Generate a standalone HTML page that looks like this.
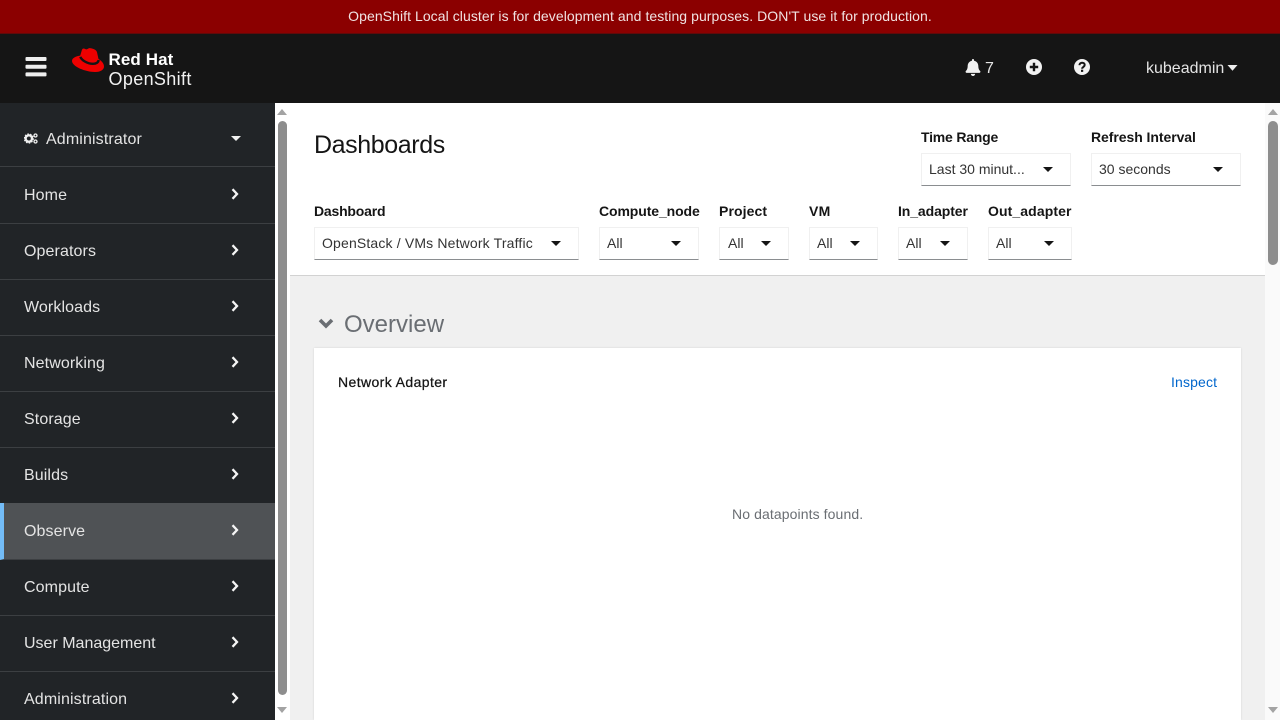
<!DOCTYPE html>
<html lang="en">
<head>
<meta charset="utf-8">
<title>Dashboards · OpenShift</title>
<style>
*{box-sizing:border-box}
html,body{margin:0;padding:0;width:1280px;height:720px;overflow:hidden;background:#fff;font-family:"Liberation Sans",sans-serif;color:#151515}
.a{position:absolute;white-space:nowrap}
#banner{left:0;top:0;width:1280px;height:34px;background:#8b0000;color:#f0e2e2;font-size:14px;line-height:33px;text-align:center;border-bottom:1px solid #5f0a0a;letter-spacing:.066px}
#head{left:0;top:34px;width:1280px;height:69px;background:#151515}
#side{left:0;top:103px;width:275px;height:617px;background:#212427;overflow:hidden}
.nav{position:absolute;left:0;width:275px;height:56px;border-bottom:1px solid #3c3f42;color:#e4e4e4;font-size:16px;line-height:55px;padding-left:24px;letter-spacing:.1px}
.nav svg{position:absolute;left:231px;top:20px}
.nav.on{background:#4f5255;border-left:4px solid #73bcf7;padding-left:20px;border-bottom-color:#3c3f42}
.nav.on svg{left:227px;top:21px}
.sb{background:#fafafa}
.th{background:#8d8d8d;border-radius:5px}
.lb{font-size:14px;font-weight:700;color:#151515;line-height:18px}
.sel{position:absolute;height:33px;background:#fff;border:1px solid #f0f0f0;border-bottom:1px solid #8a8d90;font-size:14px;line-height:31px;padding-left:7px;color:#333;white-space:nowrap}
.sel i{position:absolute;top:13px;width:0;height:0;border-left:5px solid transparent;border-right:5px solid transparent;border-top:5px solid #151515}
</style>
</head>
<body>
<div id="banner" class="a">OpenShift Local cluster is for development and testing purposes. DON'T use it for production.</div>
<div id="head" class="a"></div>

<!-- hamburger -->
<svg class="a" style="left:25px;top:57px" width="22" height="20" viewBox="0 0 22 20"><g fill="#eeeeee"><rect x="0.5" y="0" width="21" height="4" rx="1"/><rect x="0.5" y="7.7" width="21" height="4" rx="1"/><rect x="0.5" y="15.4" width="21" height="4" rx="1"/></g></svg>

<!-- logo hat -->
<svg class="a" style="left:71px;top:47px" width="34" height="27" viewBox="0 0 34 27">
<path d="M9.200 8.600C5 9.200 1 10.800 1 14c0 5.500 13.500 11 23 11 6 0 9-2.500 9-5.500 0-3.300-2.800-5.800-5.500-7.500L26 5.200C25.500 3.500 24 2.300 21 1.500 19 1 18 1 17 1.800c-1 .7-2 .7-3 .1-1.500-.8-2.600-.4-3.100 1.100z" fill="#ee0000"/>
<path d="M9.300 9.800C10.500 13 16 16.800 22 16.800c3.200 0 5.400-1.300 5.600-3.800" fill="none" stroke="#151515" stroke-width="2.400"/>
</svg>
<div class="a" style="left:108.500px;top:50px;font-size:17px;font-weight:700;color:#fff;line-height:20px;letter-spacing:.1px">Red Hat</div>
<div class="a" style="left:108.500px;top:69px;font-size:18px;color:#f2f2f2;line-height:20px;letter-spacing:.35px">OpenShift</div>

<!-- header right -->
<svg class="a" style="left:965px;top:59px" width="16" height="17" viewBox="0 0 448 512"><path fill="#f0f0f0" d="M224 512c35.300 0 64-28.700 64-64H160c0 35.300 28.700 64 64 64zm215.400-149.700c-19.300-20.800-55.500-52-55.500-154.300 0-77.700-54.500-139.900-127.900-155.200V32c0-17.700-14.300-32-32-32s-32 14.300-32 32v20.800C118.600 68.100 64.100 130.300 64.100 208c0 102.300-36.200 133.500-55.500 154.300-6 6.400-8.700 14.100-8.600 21.700.100 16.400 13 32 32.100 32h383.800c19.100 0 32-15.600 32.100-32 .1-7.600-2.600-15.300-8.600-21.700z"/></svg>
<div class="a" style="left:985px;top:59px;font-size:16px;line-height:19px;color:#e4e4e4">7</div>
<svg class="a" style="left:1026px;top:59px" width="16" height="16" viewBox="0 0 16 16"><circle cx="8" cy="8" r="8" fill="#f2f2f2"/><path d="M8 3.800v8.400M3.800 8h8.400" stroke="#151515" stroke-width="2.400"/></svg>
<svg class="a" style="left:1074px;top:59px" width="16" height="16" viewBox="0 0 16 16"><circle cx="8" cy="8" r="8" fill="#f2f2f2"/><path d="M5.400 6.200C5.500 4.600 6.700 3.700 8.100 3.700c1.500 0 2.600.9 2.600 2.200 0 2-2.600 2-2.600 3.900" fill="none" stroke="#151515" stroke-width="2"/><rect x="7" y="10.700" width="2.200" height="2.200" fill="#151515"/></svg>
<div class="a" style="left:1146px;top:59px;font-size:16px;line-height:19px;color:#e4e4e4">kubeadmin</div>
<svg class="a" style="left:1227px;top:65px" width="11" height="6" viewBox="0 0 11 6"><path d="M.5 0h10L5.500 5.800z" fill="#eee"/></svg>

<!-- sidebar -->
<div id="side" class="a">
<div class="nav" style="top:0;height:64px;line-height:73px;padding-left:46px;letter-spacing:.13px">Administrator
<svg style="position:absolute;left:231px;top:33px" width="10" height="5" viewBox="0 0 10 5"><path d="M0 0h10L5 5z" fill="#f0f0f0"/></svg></div>
<svg class="a" style="left:24px;top:30px" width="14" height="11" viewBox="0 0 14 11"><circle cx="4.800" cy="5.500" r="3.200" fill="none" stroke="#f0f0f0" stroke-width="2.400"/><circle cx="4.800" cy="5.500" r="4.500" fill="none" stroke="#f0f0f0" stroke-width="1.200" stroke-dasharray="1.500 1.300"/><circle cx="11.500" cy="2.500" r="1.500" fill="none" stroke="#f0f0f0" stroke-width="1.300"/><circle cx="11.500" cy="8.500" r="1.500" fill="none" stroke="#f0f0f0" stroke-width="1.300"/></svg>
<div class="nav" style="top:65px">Home<svg width="8" height="12" viewBox="0 0 8 12"><path d="M1.500 1.200L6 6l-4.500 4.800" fill="none" stroke="#f5f5f5" stroke-width="2.300"/></svg></div>
<div class="nav" style="top:121px">Operators<svg width="8" height="12" viewBox="0 0 8 12"><path d="M1.500 1.200L6 6l-4.500 4.800" fill="none" stroke="#f5f5f5" stroke-width="2.300"/></svg></div>
<div class="nav" style="top:177px">Workloads<svg width="8" height="12" viewBox="0 0 8 12"><path d="M1.500 1.200L6 6l-4.500 4.800" fill="none" stroke="#f5f5f5" stroke-width="2.300"/></svg></div>
<div class="nav" style="top:233px">Networking<svg width="8" height="12" viewBox="0 0 8 12"><path d="M1.500 1.200L6 6l-4.500 4.800" fill="none" stroke="#f5f5f5" stroke-width="2.300"/></svg></div>
<div class="nav" style="top:289px">Storage<svg width="8" height="12" viewBox="0 0 8 12"><path d="M1.500 1.200L6 6l-4.500 4.800" fill="none" stroke="#f5f5f5" stroke-width="2.300"/></svg></div>
<div class="nav" style="top:345px">Builds<svg width="8" height="12" viewBox="0 0 8 12"><path d="M1.500 1.200L6 6l-4.500 4.800" fill="none" stroke="#f5f5f5" stroke-width="2.300"/></svg></div>
<div class="nav on" style="top:400px;height:57px;line-height:57px">Observe<svg width="8" height="12" viewBox="0 0 8 12"><path d="M1.500 1.200L6 6l-4.500 4.800" fill="none" stroke="#f5f5f5" stroke-width="2.300"/></svg></div>
<div class="nav" style="top:457px">Compute<svg width="8" height="12" viewBox="0 0 8 12"><path d="M1.500 1.200L6 6l-4.500 4.800" fill="none" stroke="#f5f5f5" stroke-width="2.300"/></svg></div>
<div class="nav" style="top:513px;letter-spacing:0">User Management<svg width="8" height="12" viewBox="0 0 8 12"><path d="M1.500 1.200L6 6l-4.500 4.800" fill="none" stroke="#f5f5f5" stroke-width="2.300"/></svg></div>
<div class="nav" style="top:569px;border-bottom:0;letter-spacing:.13px">Administration<svg width="8" height="12" viewBox="0 0 8 12"><path d="M1.500 1.200L6 6l-4.500 4.800" fill="none" stroke="#f5f5f5" stroke-width="2.300"/></svg></div>
</div>

<!-- sidebar scrollbar -->
<div class="a" style="left:275px;top:103px;width:15px;height:617px;background:#fff"></div>
<div class="a th" style="left:278px;top:121px;width:9px;height:574px"></div>
<svg class="a" style="left:277px;top:109px" width="10" height="6" viewBox="0 0 10 6"><path d="M0 6h10L5 0z" fill="#a3a3a3"/></svg>
<svg class="a" style="left:277px;top:707px" width="10" height="6" viewBox="0 0 10 6"><path d="M0 0h10L5 6z" fill="#a3a3a3"/></svg>

<!-- main -->
<div class="a" style="left:290px;top:103px;width:975px;height:172px;background:#fff"></div>
<div class="a" style="left:290px;top:275px;width:975px;height:445px;background:#f0f0f0;border-top:1px solid #d2d2d2"></div>
<div class="a sb" style="left:1265px;top:103px;width:15px;height:617px"></div>
<div class="a th" style="left:1268px;top:121px;width:10px;height:144px"></div>
<svg class="a" style="left:1268px;top:109px" width="10" height="6" viewBox="0 0 10 6"><path d="M0 6h10L5 0z" fill="#a3a3a3"/></svg>
<svg class="a" style="left:1268px;top:707px" width="10" height="6" viewBox="0 0 10 6"><path d="M0 0h10L5 6z" fill="#a3a3a3"/></svg>

<div class="a" style="left:314px;top:130px;font-size:25px;line-height:30px;color:#151515;letter-spacing:-.4px">Dashboards</div>

<div class="a lb" style="left:921px;top:128px;letter-spacing:-.2px">Time Range</div>
<div class="sel" style="left:921px;top:153px;width:150px">Last 30 minut...<i style="left:121px"></i></div>
<div class="a lb" style="left:1091px;top:128px;letter-spacing:-.06px">Refresh Interval</div>
<div class="sel" style="left:1091px;top:153px;width:150px">30 seconds<i style="left:121px"></i></div>

<div class="a lb" style="left:314px;top:202px;letter-spacing:-.2px">Dashboard</div>
<div class="sel" style="left:314px;top:227px;width:265px;letter-spacing:.16px">OpenStack / VMs Network Traffic<i style="left:236px"></i></div>
<div class="a lb" style="left:599px;top:202px;letter-spacing:-.1px">Compute_node</div>
<div class="sel" style="left:599px;top:227px;width:100px">All<i style="left:71px"></i></div>
<div class="a lb" style="left:719px;top:202px;letter-spacing:.1px">Project</div>
<div class="sel" style="left:719px;top:227px;width:70px;padding-left:8px">All<i style="left:41px"></i></div>
<div class="a lb" style="left:809px;top:202px;letter-spacing:.3px">VM</div>
<div class="sel" style="left:809px;top:227px;width:69px">All<i style="left:40px"></i></div>
<div class="a lb" style="left:898px;top:202px;letter-spacing:-.1px">In_adapter</div>
<div class="sel" style="left:898px;top:227px;width:70px">All<i style="left:41px"></i></div>
<div class="a lb" style="left:988px;top:202px;letter-spacing:.1px">Out_adapter</div>
<div class="sel" style="left:988px;top:227px;width:84px">All<i style="left:55px"></i></div>

<!-- overview -->
<svg class="a" style="left:318px;top:318px" width="16" height="11" viewBox="0 0 16 11"><path d="M2 2l6 6 6-6" fill="none" stroke="#6a6e73" stroke-width="3.600"/></svg>
<div class="a" style="left:344px;top:310px;font-size:24px;line-height:30px;color:#6a6e73">Overview</div>

<div class="a" style="left:314px;top:348px;width:927px;height:372px;background:#fff;box-shadow:0 0 2px rgba(3,3,3,.12)"></div>
<div class="a" style="left:338px;top:373px;font-size:14px;line-height:18px;color:#151515;letter-spacing:.4px;-webkit-text-stroke:.25px #151515">Network Adapter</div>
<div class="a" style="left:1171px;top:373px;font-size:14px;line-height:18px;color:#0066cc;letter-spacing:.15px">Inspect</div>
<div class="a" style="left:732px;top:505px;font-size:14px;line-height:18px;color:#6a6e73;letter-spacing:.1px">No datapoints found.</div>
</body>
</html>
